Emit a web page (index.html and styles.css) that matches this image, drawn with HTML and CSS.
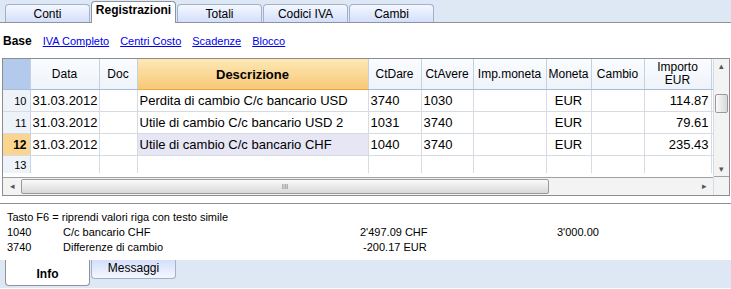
FILE: index.html
```html
<!DOCTYPE html>
<html lang="it">
<head>
  <meta charset="UTF-8">
  <title>Registrazioni</title>
  <link rel="stylesheet" href="styles.css">
</head>
<body>
  <!-- Top tabs -->
  <div class="tabbar">
    <div class="tab">Conti</div>
    <div class="tab active">Registrazioni</div>
    <div class="tab">Totali</div>
    <div class="tab">Codici IVA</div>
    <div class="tab">Cambi</div>
  </div>

  <!-- Views -->
  <div class="views">
    <b>Base</b>
    <a href="#">IVA Completo</a>
    <a href="#">Centri Costo</a>
    <a href="#">Scadenze</a>
    <a href="#">Blocco</a>
  </div>

  <!-- Grid -->
  <div class="grid">
    <div class="grid-main">
      <table class="table">
        <colgroup>
          <col style="width:27px"><col style="width:69px"><col style="width:38px"><col style="width:231px">
          <col style="width:53px"><col style="width:52px"><col style="width:73px"><col style="width:45px">
          <col style="width:53px"><col style="width:67px"><col style="width:2px">
        </colgroup>
        <tr class="head">
          <th class="corner"></th>
          <th>Data</th>
          <th>Doc</th>
          <th class="sel">Descrizione</th>
          <th>CtDare</th>
          <th>CtAvere</th>
          <th>Imp.moneta</th>
          <th>Moneta</th>
          <th>Cambio</th>
          <th>Importo<br>EUR</th>
          <th class="dot"></th>
        </tr>
        <tr>
          <td class="num">10</td><td>31.03.2012</td><td></td><td>Perdita di cambio C/c bancario USD</td>
          <td>3740</td><td>1030</td><td></td><td class="c">EUR</td><td></td><td class="r">114.87</td><td></td>
        </tr>
        <tr>
          <td class="num">11</td><td>31.03.2012</td><td></td><td>Utile di cambio C/c bancario USD 2</td>
          <td>1031</td><td>3740</td><td></td><td class="c">EUR</td><td></td><td class="r">79.61</td><td></td>
        </tr>
        <tr>
          <td class="num cur">12</td><td>31.03.2012</td><td></td><td class="hl">Utile di cambio C/c bancario CHF</td>
          <td>1040</td><td>3740</td><td></td><td class="c">EUR</td><td></td><td class="r">235.43</td><td></td>
        </tr>
        <tr class="last">
          <td class="num">13</td><td></td><td></td><td></td>
          <td></td><td></td><td></td><td></td><td></td><td></td><td></td>
        </tr>
      </table>
      <div class="hscroll">
        <div class="arrow">&#9666;</div>
        <div class="hthumb"><span>III</span></div>
        <div class="htrack"></div>
        <div class="arrow">&#9656;</div>
      </div>
    </div>
    <div class="vscroll">
      <div class="varrow">&#9652;</div>
      <div class="vgap"></div>
      <div class="vthumb"></div>
      <div class="vtrack"></div>
      <div class="varrow">&#9662;</div>
      <div class="vcorner"></div>
    </div>
  </div>

  <!-- Info panel -->
  <div class="info">
    <div class="line">Tasto F6 = riprendi valori riga con testo simile</div>
    <div class="line"><span class="acc">1040</span><span class="desc">C/c bancario CHF</span><span class="amt">2'497.09 CHF</span><span>3'000.00</span></div>
    <div class="line"><span class="acc">3740</span><span class="desc">Differenze di cambio</span><span class="amt">&nbsp;-200.17 EUR</span></div>
  </div>

  <div class="bottombar">
    <div class="btab active">Info</div>
    <div class="btab">Messaggi</div>
  </div>
</body>
</html>
```

FILE: styles.css
```css
body {
  margin: 0;
  width: 731px;
  height: 289px;
  overflow: hidden;
  background: #fff;
  font-family: 'Liberation Sans', Arial, sans-serif;
  color: #000;
}
.tabbar {
  display: flex;
  align-items: flex-end;
  height: 22px;
  padding-left: 5px;
  background: #dde8f4;
  border-bottom: 1px solid #8f949c;
}
.tab {
  width: 83px;
  height: 17px;
  margin-right: 1px;
  border: 1px solid #9fb1cc;
  border-bottom: none;
  border-radius: 4px 4px 0 0;
  background: linear-gradient(#f4f7fe, #d3dffa);
  font-size: 12px;
  line-height: 19px;
  text-align: center;
}
.tab.active {
  height: 21px;
  margin-bottom: -1px;
  border-color: #8f949c;
  background: #fff;
  font-weight: bold;
  font-size: 12px;
  line-height: 17px;
}
.views {
  display: flex;
  align-items: center;
  gap: 11px;
  height: 35px;
  padding-left: 3px;
  font-size: 11px;
}
.views b {
  font-size: 12px;
}
.views a {
  color: #0000ee;
}
.grid {
  display: flex;
  height: 136px;
  margin: 0 1px 0 2px;
  border: 1px solid #8d8d8d;
}
.grid-main {
  width: 710px;
  display: flex;
  flex-direction: column;
}
.table {
  table-layout: fixed;
  border-collapse: collapse;
  width: 710px;
  font-size: 13px;
}
.table td, .table th {
  padding: 0 2px;
  border-right: 1px solid #d6dbe3;
  border-bottom: 1px solid #d6dbe3;
  white-space: nowrap;
  overflow: hidden;
  height: 21px;
}
.table th {
  height: 30px;
  font-weight: normal;
  font-size: 12px;
  line-height: 13px;
  background: linear-gradient(#fafcfe, #eef3fa);
  border-right-color: #c3d1e4;
  border-bottom-color: #a8bcd8;
}
.table th.corner {
  background: #b3caec;
}
.table th.sel {
  font-weight: bold;
  font-size: 13px;
  background: linear-gradient(#fde8b6, #f7c877);
  border-bottom-color: #f0a53c;
}
.table th.dot {
  padding: 0;
}
.table td.num {
  text-align: right;
  font-size: 11px;
  padding-right: 3px;
  background: #eef3f9;
  border-right-color: #c7d3e4;
}
.table td.cur {
  font-weight: bold;
  font-size: 12px;
  background: #fad58f;
}
.table td.hl {
  background: #e6e6f5;
}
.table td.c {
  text-align: center;
}
.table td.r {
  text-align: right;
}
.table tr.last td {
  height: 17px;
  border-bottom: none;
}
.hscroll {
  display: flex;
  height: 17px;
  margin-top: auto;
  border-top: 1px solid #a0a0a0;
  background: #f3f3f3;
}
.arrow {
  width: 18px;
  font-size: 9px;
  line-height: 17px;
  text-align: center;
  color: #555;
}
.hthumb {
  width: 526px;
  margin: 1px 0;
  border: 1px solid #9a9a9a;
  border-radius: 2px;
  background: linear-gradient(#fafafa, #d9d9d9);
  font-size: 8px;
  line-height: 13px;
  text-align: center;
  color: #777;
}
.htrack {
  flex: 1;
}
.vscroll {
  width: 16px;
  display: flex;
  flex-direction: column;
  border-left: 1px solid #d6dbe3;
  background: #f3f3f3;
}
.varrow {
  height: 14px;
  font-size: 9px;
  line-height: 14px;
  text-align: center;
  color: #555;
}
.vgap {
  height: 21px;
}
.vthumb {
  height: 17px;
  margin: 0 1px;
  border: 1px solid #9a9a9a;
  border-radius: 2px;
  background: linear-gradient(90deg, #fafafa, #d9d9d9);
}
.vtrack {
  flex: 1;
}
.vcorner {
  height: 18px;
  border-top: 1px solid #a0a0a0;
  background: #f3f3f3;
}
.info {
  height: 50px;
  margin-top: 7px;
  padding-top: 6px;
  padding-left: 7px;
  border-top: 1px solid #8f949c;
  border-bottom: 1px solid #8f949c;
  font-size: 11px;
}
.line {
  display: flex;
  height: 15px;
  line-height: 15px;
}
.acc {
  width: 56px;
}
.desc {
  width: 297px;
}
.amt {
  width: 197px;
}
.bottombar {
  display: flex;
  align-items: flex-start;
  height: 28px;
  padding-left: 5px;
  background: #dde8f4;
  margin-top: -1px;
}
.btab {
  width: 83px;
  height: 18px;
  margin-right: 1px;
  border: 1px solid #9fb1cc;
  border-top: none;
  border-radius: 0 0 4px 4px;
  background: linear-gradient(#d3dffa, #f4f7fe);
  font-size: 12px;
  line-height: 16px;
  text-align: center;
}
.btab.active {
  height: 25px;
  border-color: #8f949c;
  background: #fff;
  font-weight: bold;
  line-height: 28px;
}
```
